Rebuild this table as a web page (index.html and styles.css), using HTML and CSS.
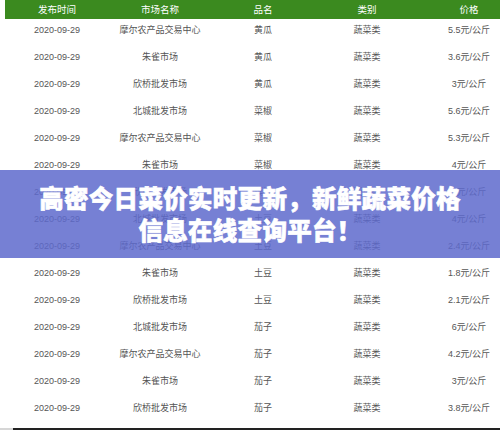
FILE: index.html
```html
<!DOCTYPE html>
<html lang="zh-CN">
<head>
<meta charset="utf-8">
<title>高密今日菜价</title>
<link rel="stylesheet" href="styles.css">
</head>
<body>
<div class="page">
  <div class="table">
    <div class="row head">
      <div>发布时间</div><div>市场名称</div><div>品名</div><div>类别</div><div>价格</div>
    </div>
    <div class="row"><div>2020-09-29</div><div>摩尔农产品交易中心</div><div>黄瓜</div><div>蔬菜类</div><div>5.5元/公斤</div></div>
    <div class="row"><div>2020-09-29</div><div>朱雀市场</div><div>黄瓜</div><div>蔬菜类</div><div>3.6元/公斤</div></div>
    <div class="row"><div>2020-09-29</div><div>欣桥批发市场</div><div>黄瓜</div><div>蔬菜类</div><div>3元/公斤</div></div>
    <div class="row"><div>2020-09-29</div><div>北城批发市场</div><div>菜椒</div><div>蔬菜类</div><div>5.6元/公斤</div></div>
    <div class="row"><div>2020-09-29</div><div>摩尔农产品交易中心</div><div>菜椒</div><div>蔬菜类</div><div>5.3元/公斤</div></div>
    <div class="row"><div>2020-09-29</div><div>朱雀市场</div><div>菜椒</div><div>蔬菜类</div><div>4元/公斤</div></div>
    <div class="row"><div>2020-09-29</div><div>欣桥批发市场</div><div>菜椒</div><div>蔬菜类</div><div>5元/公斤</div></div>
    <div class="row"><div>2020-09-29</div><div>北城批发市场</div><div>土豆</div><div>蔬菜类</div><div>4元/公斤</div></div>
    <div class="row"><div>2020-09-29</div><div>摩尔农产品交易中心</div><div>土豆</div><div>蔬菜类</div><div>2.4元/公斤</div></div>
    <div class="row"><div>2020-09-29</div><div>朱雀市场</div><div>土豆</div><div>蔬菜类</div><div>1.8元/公斤</div></div>
    <div class="row"><div>2020-09-29</div><div>欣桥批发市场</div><div>土豆</div><div>蔬菜类</div><div>2.1元/公斤</div></div>
    <div class="row"><div>2020-09-29</div><div>北城批发市场</div><div>茄子</div><div>蔬菜类</div><div>6元/公斤</div></div>
    <div class="row"><div>2020-09-29</div><div>摩尔农产品交易中心</div><div>茄子</div><div>蔬菜类</div><div>4.2元/公斤</div></div>
    <div class="row"><div>2020-09-29</div><div>朱雀市场</div><div>茄子</div><div>蔬菜类</div><div>3元/公斤</div></div>
    <div class="row"><div>2020-09-29</div><div>欣桥批发市场</div><div>茄子</div><div>蔬菜类</div><div>3.8元/公斤</div></div>
  </div>
  <div class="bottom-bar"><span class="bar-light"></span><span class="bar-dark"></span></div>
  <div class="banner">
    <h1 class="title">高密今日菜价实时更新，新鲜蔬菜价格<br>信息在线查询平台！</h1>
  </div>
</div>
</body>
</html>
```

FILE: styles.css
```css
html, body {
  margin: 0;
  padding: 0;
  background: #ffffff;
}

.page {
  position: relative;
  width: 500px;
  height: 430px;
  overflow: hidden;
  font-family: "Liberation Sans", "Noto Sans CJK SC", sans-serif;
}

.table {
  margin-left: 5px;
  width: 514px;
}

.row {
  display: grid;
  grid-template-columns: 104px 102px 104px 104px 100px;
  height: 27px;
  font-size: 9px;
  line-height: 22px;
  color: #555555;
  text-align: center;
}

.row.head {
  height: 19px;
  line-height: 19px;
  background: #3b8a1f;
  color: #ffffff;
  font-size: 9.5px;
}

.bottom-bar {
  display: flex;
  height: 2px;
  margin-top: 4px;
}

.bar-light {
  width: 13px;
  background: #d6d6d6;
}

.bar-dark {
  flex: 1;
  background: #222222;
}

.banner {
  position: absolute;
  left: 0;
  top: 170px;
  width: 500px;
  height: 88px;
  background: rgba(94, 106, 205, 0.85);
  display: flex;
  align-items: center;
  justify-content: center;
}

.title {
  margin: 0;
  color: #ffffff;
  font-family: "Noto Sans CJK SC", sans-serif;
  font-weight: 900;
  font-size: 24.5px;
  line-height: 32px;
  text-align: center;
  letter-spacing: 0.3px;
  -webkit-text-stroke: 0.6px #ffffff;
}
```
